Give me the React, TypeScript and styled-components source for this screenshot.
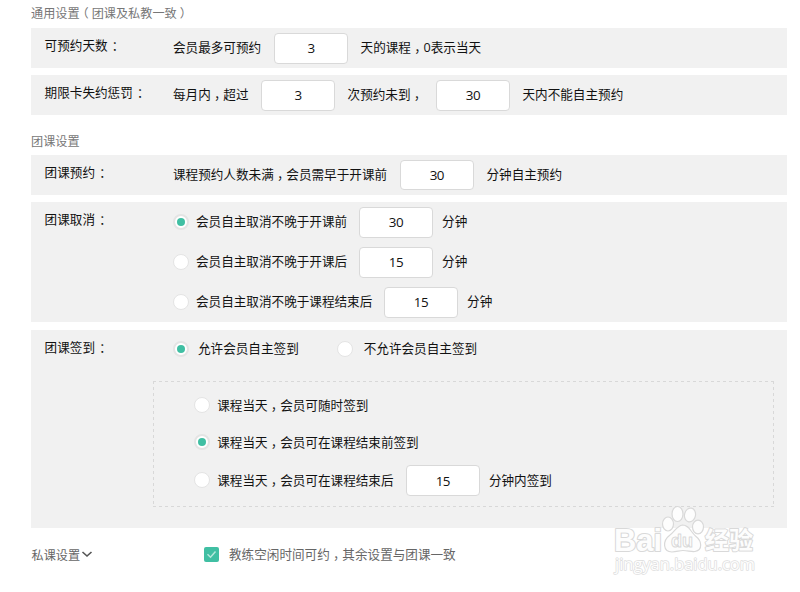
import React from "react";
import styled, { createGlobalStyle } from "styled-components";

const GlobalStyle = createGlobalStyle`
  * { box-sizing: border-box; }
  body {
    margin: 0;
    background: #fff;
    color: #111;
    font-family: "Open Sans", "Noto Sans CJK SC", sans-serif;
    font-size: 12.6px;
    font-weight: 400;
  }
`;

const Page = styled.main`
  position: relative;
  width: 800px;
  height: 592px;
  padding-left: 31px;
  overflow: hidden;
`;

const Heading = styled.h2<{ $height: number; $lift: number }>`
  margin: 0;
  height: ${(p) => p.$height}px;
  padding-top: ${(p) => p.$lift}px;
  font-size: 12.15px;
  font-weight: 400;
  line-height: 18px;
  color: #777;
`;

const Panel = styled.section<{ $height: number; $gap?: number }>`
  display: flex;
  width: 756px;
  height: ${(p) => p.$height}px;
  margin-bottom: ${(p) => p.$gap ?? 0}px;
  background: #f1f1f1;
`;

const Label = styled.div`
  width: 141.6px;
  padding-left: 13.6px;
  line-height: 36px;
  white-space: nowrap;
`;

const Colon = styled.span`
  display: inline-block;
  width: 13.6px;
  height: 16px;
  padding-left: 1px;
  line-height: 16px;
  transform: translateY(1px);
  font-family: "Noto Sans CJK TC", sans-serif;
`;

const Comma = styled.span`
  display: inline-block;
  height: 16px;
  line-height: 16px;
  transform: translateY(4px);
  font-family: "Noto Sans CJK TC", sans-serif;
`;

const Paren = styled.span<{ $shift: number }>`
  position: relative;
  left: ${(p) => p.$shift}px;
`;

const Rows = styled.div`
  flex: 1;
`;

const Row = styled.div<{ $height?: number }>`
  display: flex;
  align-items: center;
  height: ${(p) => p.$height ?? 40}px;
`;

const Text = styled.span<{ $left?: number }>`
  margin-left: ${(p) => p.$left ?? 0}px;
  line-height: 20px;
  white-space: nowrap;
`;

const NumberInput = styled.input<{ $left?: number; $height?: number }>`
  width: 74px;
  height: ${(p) => p.$height ?? 31}px;
  margin: 0 0 0 ${(p) => p.$left ?? 12}px;
  padding: 0;
  border: 1px solid #d9d9d9;
  border-radius: 4px;
  background: #fff;
  color: #111;
  font: 400 13.4px "Open Sans", sans-serif;
  letter-spacing: -0.6px;
  text-align: center;
  outline: none;
`;

const Radio = styled.span<{ $on?: boolean; $left?: number }>`
  display: flex;
  flex: none;
  align-items: center;
  justify-content: center;
  width: 16px;
  height: 16px;
  margin: 0 0 1px ${(p) => p.$left ?? 0}px;
  border: ${(p) => (p.$on ? 2 : 1.5)}px solid #e4e4e4;
  border-radius: 50%;
  background: #fff;

  &::after {
    content: "";
    width: 8px;
    height: 8px;
    border-radius: 50%;
    background: ${(p) => (p.$on ? "#40bfa3" : "transparent")};
  }
`;

const BoxWrap = styled.div`
  position: relative;
`;

const OptionsBox = styled.div`
  width: 621px;
  height: 126px;
  margin: 13px 0 0 -19.6px;
  padding: 6px 0 0 40px;
`;

const Dashes = styled.svg`
  position: absolute;
  top: 0;
  left: -19.6px;
`;

const Footer = styled.footer`
  display: flex;
  align-items: center;
  height: 53px;
  color: #666;
`;

const FooterTitle = styled.span`
  width: 49px;
  padding-left: 0.5px;
  font-size: 12.15px;
  white-space: nowrap;
`;

const Arrow = styled.svg`
  margin: 0 111px 2px 1px;
`;

const Watermark = styled.svg`
  position: absolute;
  left: 608px;
  top: 500px;
`;

export default function App() {
  return (
    <>
      <GlobalStyle />
      <Page>
        <Heading $height={28} $lift={5}>
          通用设置<Paren $shift={-3}>（</Paren>团课及私教一致<Paren $shift={3}>）</Paren>
        </Heading>
        <Panel $height={40} $gap={7}>
          <Label>可预约天数<Colon>：</Colon></Label>
          <Row>
            <Text $left={0.4}>会员最多可预约</Text>
            <NumberInput $left={12.8} defaultValue="3" />
            <Text $left={12.6}>天的课程<Comma>，</Comma>0表示当天</Text>
          </Row>
        </Panel>
        <Panel $height={40}>
          <Label>期限卡失约惩罚<Colon>：</Colon></Label>
          <Row>
            <Text $left={0.4}>每月内<Comma>，</Comma>超过</Text>
            <NumberInput $left={12.4} defaultValue="3" />
            <Text $left={12.6}>次预约未到<Comma>，</Comma></Text>
            <NumberInput $left={12.8} defaultValue="30" />
            <Text $left={12.6}>天内不能自主预约</Text>
          </Row>
        </Panel>
        <Heading $height={40} $lift={18}>团课设置</Heading>
        <Panel $height={40} $gap={7}>
          <Label>团课预约<Colon>：</Colon></Label>
          <Row>
            <Text $left={0.4}>课程预约人数未满<Comma>，</Comma>会员需早于开课前</Text>
            <NumberInput $left={12.8} $height={30} defaultValue="30" />
            <Text $left={12.6}>分钟自主预约</Text>
          </Row>
        </Panel>
        <Panel $height={120} $gap={8}>
          <Label>团课取消<Colon>：</Colon></Label>
          <Rows>
            <Row>
              <Radio $on $left={0.4} />
              <Text $left={7}>会员自主取消不晚于开课前</Text>
              <NumberInput $left={11.8} defaultValue="30" />
              <Text $left={9.2}>分钟</Text>
            </Row>
            <Row>
              <Radio $left={0.4} />
              <Text $left={7}>会员自主取消不晚于开课后</Text>
              <NumberInput $left={11.8} defaultValue="15" />
              <Text $left={9.2}>分钟</Text>
            </Row>
            <Row>
              <Radio $left={0.4} />
              <Text $left={7}>会员自主取消不晚于课程结束后</Text>
              <NumberInput $left={11.6} defaultValue="15" />
              <Text $left={9.2}>分钟</Text>
            </Row>
          </Rows>
        </Panel>
        <Panel $height={198}>
          <Label>团课签到<Colon>：</Colon></Label>
          <Rows>
            <Row $height={38}>
              <Radio $on $left={0.4} />
              <Text $left={9}>允许会员自主签到</Text>
              <Radio $left={38.5} />
              <Text $left={10.5}>不允许会员自主签到</Text>
            </Row>
            <BoxWrap>
              <Dashes width="621" height="126" fill="none" stroke="#d8d8d8" strokeDasharray="3 3">
                <path d="M0 .5H621M620.5 0V126M0 125.5H621M.5 0V126" />
              </Dashes>
              <OptionsBox>
                <Row $height={37}>
                  <Radio $left={0.6} />
                  <Text $left={7.6}>课程当天<Comma>，</Comma>会员可随时签到</Text>
                </Row>
                <Row $height={37}>
                  <Radio $on $left={0.6} />
                  <Text $left={7.6}>课程当天<Comma>，</Comma>会员可在课程结束前签到</Text>
                </Row>
                <Row $height={39}>
                  <Radio $left={0.6} />
                  <Text $left={7.6}>课程当天<Comma>，</Comma>会员可在课程结束后</Text>
                  <NumberInput $left={12.2} defaultValue="15" />
                  <Text $left={9.2}>分钟内签到</Text>
                </Row>
              </OptionsBox>
            </BoxWrap>
          </Rows>
        </Panel>
        <Footer>
          <FooterTitle>私课设置</FooterTitle>
          <Arrow width="12" height="10" fill="none" stroke="#555" strokeWidth="1.6">
            <path d="M1.5 3L6 7L10.5 3" />
          </Arrow>
          <svg width="15" height="15">
            <rect width="15" height="15" rx="2" fill="#40bfa3" />
            <path d="M3.5 7.3L6.5 10.2L11.5 4.5" fill="none" stroke="#b5e8dc" strokeWidth="1.5" />
          </svg>
          <Text $left={10}>教练空闲时间可约<Comma>，</Comma>其余设置与团课一致</Text>
        </Footer>
        <Watermark width="160" height="84" fill="#fdfdfd" stroke="#d9d9d9" strokeWidth="1.2" strokeLinejoin="round">
          <text x="6" y="50.5" fontFamily="Liberation Sans" fontWeight="700" fontSize="32" strokeWidth="2.2" paintOrder="stroke" textLength="48" lengthAdjust="spacingAndGlyphs">Bai</text>
          <ellipse cx="60" cy="24" rx="5.5" ry="7" />
          <ellipse cx="69.5" cy="14" rx="5.5" ry="7.5" />
          <ellipse cx="82" cy="15" rx="5.5" ry="7" transform="rotate(12 82 15)" />
          <ellipse cx="90" cy="27" rx="5.5" ry="6.8" />
          <path d="M74.500 25C69 26 67 31 62 35C54 41 55 52 64 52C69 52 71 50.500 75 50.500C80 50.500 83 52 87 51.500C95 50 94 41 87.500 36C82 31 81 25 74.500 25Z" />
          <text x="63" y="47" fontFamily="Liberation Sans" fontSize="19" fontWeight="700" textLength="22" lengthAdjust="spacingAndGlyphs" strokeWidth="1">du</text>
          <text x="97" y="49" fontFamily="Noto Sans CJK SC" fontSize="24" fontWeight="700" paintOrder="stroke" strokeWidth="2">经验</text>
          <text x="7" y="69.500" fontFamily="Open Sans" fontSize="16.500" stroke="#dedede" strokeWidth="1.5" paintOrder="stroke" textLength="140" lengthAdjust="spacingAndGlyphs">jingyan.baidu.com</text>
        </Watermark>
      </Page>
    </>
  );
}
